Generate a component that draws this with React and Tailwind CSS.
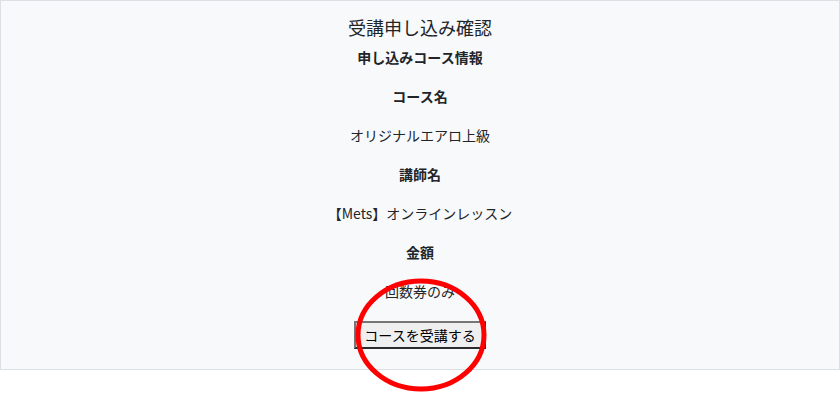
import React from 'react';

const rows = [
  { label: 'コース名', value: 'オリジナルエアロ上級' },
  { label: '講師名', value: '【Mets】オンラインレッスン' },
  { label: '金額', value: '回数券のみ' },
];

export default function App() {
  return (
    <div className="relative w-[840px] h-[400px] bg-white" style={{ fontFamily: '"Noto Sans CJK JP", "Open Sans", sans-serif' }}>
      <div className="border border-[#dcdfe3] bg-[#f8f9fb] pt-[13px] pb-[20px] flex flex-col items-center text-[#212529]">
        <h1 className="text-[18px] leading-[27px] font-normal">受講申し込み確認</h1>
        <div className="mt-[6px] flex flex-col items-center gap-[18px]">
          <p className="text-[14px] leading-[21px] font-bold">申し込みコース情報</p>
          {rows.map((row, i) => (
            <React.Fragment key={i}>
              <p className="text-[14px] leading-[21px] font-bold">{row.label}</p>
              <p className="text-[14px] leading-[21px]">{row.value}</p>
            </React.Fragment>
          ))}
          <button className="mt-[1px] h-[28px] px-[8px] text-[14px] leading-[20px] text-black bg-[#efefef] border-2 border-t-[#767676] border-l-[#767676] border-r-[#2b2b2b] border-b-[#2b2b2b]">
            コースを受講する
          </button>
        </div>
      </div>

      {/* red annotation ring */}
      <svg className="absolute left-[350px] top-[274px] pointer-events-none" width="142" height="122" viewBox="0 0 142 122">
        <ellipse cx="71" cy="61" rx="63" ry="54" fill="none" stroke="#ff0000" strokeWidth="5" />
      </svg>
    </div>
  );
}
